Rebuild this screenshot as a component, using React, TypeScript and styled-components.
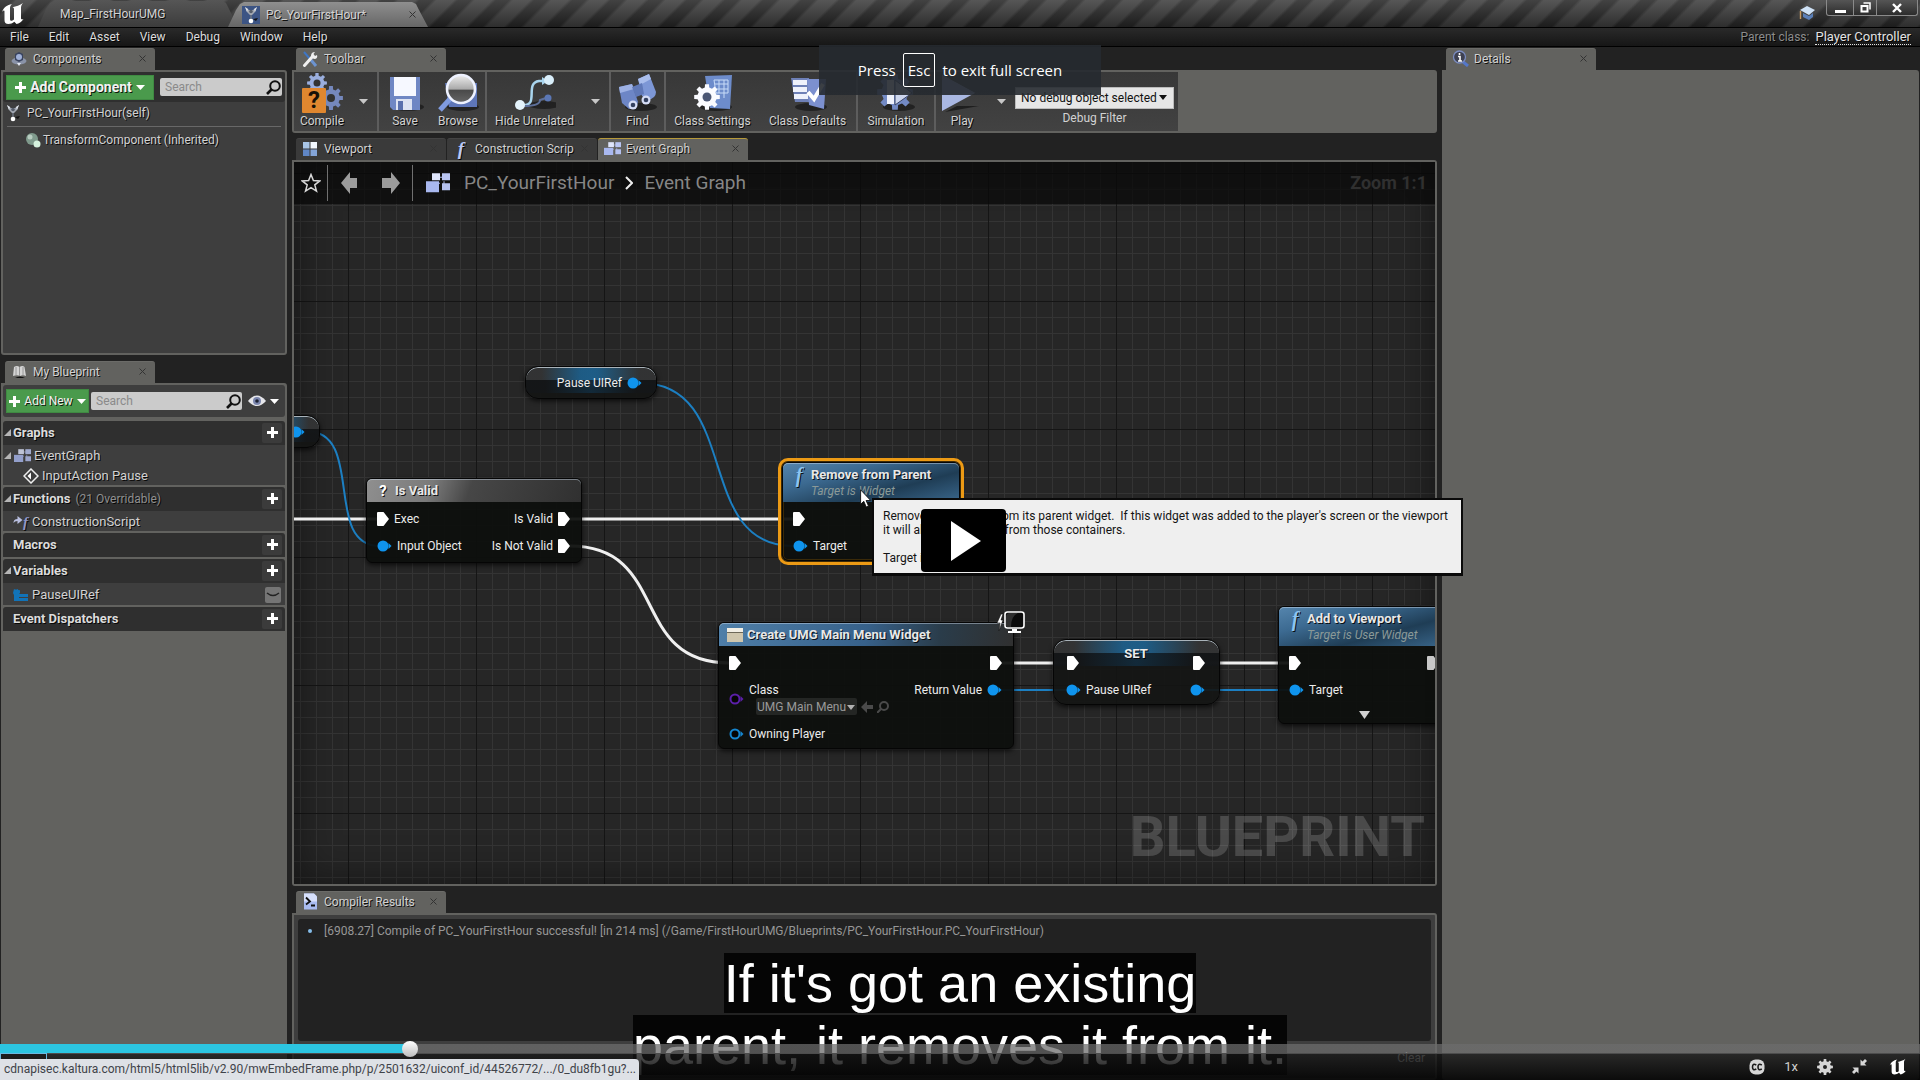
import React from "react";
import styled, { createGlobalStyle, css } from "styled-components";

const ui = `Roboto, "Noto Sans", sans-serif`;
const frame = "#62625f";
const panel = "#3e3e3e";
const base = "#222222";
const accent = "#0f94ee";

const Global = createGlobalStyle`
  *, *::before, *::after { box-sizing: border-box; }
  body { margin: 0; background: ${base}; overflow: hidden; }
  button, input, select { font: inherit; color: inherit; margin: 0; padding: 0; border: 0; background: none; }
  svg { display: block; flex: none; }
`;

const App_ = styled.div`
  position: relative;
  display: flex;
  flex-direction: column;
  height: 100vh;
  overflow: hidden;
  background: ${base};
  color: #d2d2d2;
  font: 12px/16px ${ui};
  text-shadow: 1px 1px 0 rgba(0, 0, 0, 0.85);
`;

/* ---------- window chrome ---------- */
const TitleBar = styled.header`
  display: flex;
  align-items: flex-end;
  height: 28px;
  border-bottom: 1px solid #000;
  background:
    linear-gradient(rgba(255, 255, 255, 0.13), rgba(0, 0, 0, 0.25)),
    repeating-linear-gradient(135deg, #262626 0 9px, #3d3d3d 12px 24px, #262626 27px);
`;
const Logo = styled.div`
  width: 38px;
  height: 27px;
  padding: 2px 0 0 1px;
`;
const WindowTab = styled.div<{ $active?: boolean }>`
  position: relative;
  display: flex;
  align-items: center;
  gap: 6px;
  width: 200px;
  height: ${(p) => (p.$active ? 25 : 26)}px;
  margin-left: ${(p) => (p.$active ? -10 : 0)}px;
  padding: 0 12px 0 ${(p) => (p.$active ? 14 : 22)}px;
  clip-path: polygon(0 100%, 8px 8px, 12px 2px, 16px 0, calc(100% - 16px) 0, calc(100% - 12px) 2px, calc(100% - 9px) 8px, 100% 100%);
  background: ${(p) => (p.$active ? "linear-gradient(#8f8f8f, #666)" : "linear-gradient(#555, #3c3c3c)")};
  button { margin-left: auto; }
`;
const TitleEnd = styled.div`
  display: flex;
  align-self: flex-start;
  margin-left: auto;
  padding-right: 2px;
  gap: 11px;
`;
const WindowButtons = styled.div`
  display: flex;
  height: 16px;
  border: 1px solid #8a8a8a;
  border-top: 0;
  border-radius: 0 0 3px 3px;
  background: linear-gradient(#555, #2c2c2c);
`;
const WindowButton = styled.button<{ $w: number }>`
  display: grid;
  place-items: center;
  width: ${(p) => p.$w}px;
  & + & { border-left: 1px solid #8a8a8a; }
`;
const MenuBar = styled.nav`
  display: flex;
  align-items: center;
  height: 19px;
  border-bottom: 1px solid #000;
  background: linear-gradient(#2a2a2a, #161616);
  button { padding: 0 10px; color: #dcdcdc; text-shadow: inherit; }
`;
const ParentClass = styled.div`
  display: flex;
  gap: 6px;
  margin-left: auto;
  padding-right: 9px;
  color: #8c8c8c;
  a { color: #e2e2e2; text-decoration: none; border-bottom: 1px dotted #e2e2e2; font-size: 13px; line-height: 15px; }
`;

/* ---------- docking ---------- */
const Workspace = styled.div`
  flex: 1;
  min-height: 0;
  display: grid;
  grid-template-columns: 286px minmax(0, 1fr) 477px;
  column-gap: 5px;
  padding: 1px 1px 0;
`;
const Column = styled.div`
  display: flex;
  flex-direction: column;
  min-height: 0;
  min-width: 0;
`;
const TabStrip = styled.div<{ $gap?: number }>`
  display: flex;
  gap: 1px;
  height: 22px;
  flex: none;
  margin-top: ${(p) => p.$gap || 0}px;
  padding-left: 4px;
`;
const DockTab = styled.div<{ $tone?: "idle" | "lit" }>`
  display: flex;
  align-items: center;
  gap: 5px;
  width: 150px;
  padding: 0 9px 2px 5px;
  border-radius: 3px 3px 0 0;
  background: ${(p) => (p.$tone === "idle" ? "#3a3a3a" : frame)};
  border-top: 1px solid ${(p) => (p.$tone === "lit" ? "#b79a3a" : p.$tone === "idle" ? "#444" : "#6b6b68")};
  span { white-space: nowrap; }
  button { margin-left: auto; }
`;
const TabIcon = styled.div`
  display: grid;
  place-items: center;
  width: 18px;
  height: 18px;
`;
const CloseButton = styled.button`
  display: block;
`;
const Panel = styled.section<{ $h?: number; $bg?: string }>`
  display: flex;
  flex-direction: column;
  min-height: 0;
  flex: ${(p) => (p.$h ? `0 0 ${p.$h}px` : "1")};
  border: 2px solid ${frame};
  border-radius: 0 3px 3px 3px;
  background: ${(p) => p.$bg || panel};
`;

/* ---------- left column ---------- */
const PanelTools = styled.div<{ $light?: boolean }>`
  display: flex;
  align-items: center;
  flex: none;
  gap: ${(p) => (p.$light ? 2 : 6)}px;
  height: ${(p) => (p.$light ? 32 : 30)}px;
  padding: 0 3px;
  margin-bottom: ${(p) => (p.$light ? 4 : 0)}px;
  border-radius: 3px;
  background: ${(p) => (p.$light ? panel : "#2f2f2f")};
`;
const GreenButton = styled.button<{ $big?: boolean }>`
  display: flex;
  align-items: center;
  justify-content: center;
  gap: 4px;
  flex: none;
  width: ${(p) => (p.$big ? 148 : 83)}px;
  height: ${(p) => (p.$big ? 25 : 24)}px;
  background: #4a9a4c;
  border: 1px solid #3f8a42;
  color: #f2f2f2;
  text-shadow: inherit;
  ${(p) => p.$big && css`font-size: 14px; font-weight: 700;`}
`;
const SearchBox = styled.label`
  display: flex;
  align-items: center;
  flex: 1;
  min-width: 0;
  height: 18px;
  padding: 0 1px 0 5px;
  border-radius: 2px;
  background: #cbcbcb;
  input { flex: 1; min-width: 0; outline: 0; color: #333; text-shadow: none; }
  input::placeholder { color: #8a8a8a; opacity: 1; }
`;
const ViewButton = styled.button`
  display: flex;
  align-items: center;
  justify-content: center;
  gap: 4px;
  width: 38px;
`;
const TreeRow = styled.div<{ $indent: number; $gap?: number; $h?: number; $size?: number }>`
  display: flex;
  align-items: center;
  gap: ${(p) => p.$gap ?? 4}px;
  height: ${(p) => p.$h || 20}px;
  padding: 1px 4px 0 ${(p) => p.$indent}px;
  background: ${panel};
  font-size: ${(p) => p.$size || 13}px;
  > button { margin-left: auto; }
`;
const Divider = styled.hr`
  width: 274px;
  margin: 4px 4px 2px;
  border: 0;
  border-top: 1px solid #686868;
`;
const Section = styled.div`
  margin-bottom: 2px;
`;
const SectionHead = styled.div`
  display: flex;
  align-items: center;
  height: 24px;
  padding: 0 3px 1px 0;
  border-radius: 3px 3px 0 0;
  background: #2f2f2f;
  h3 { margin: 0; font-size: 13px; font-weight: 700; color: #dcdcdc; }
  small { margin-left: 5px; padding-top: 1px; font-size: 12px; color: #8f8f8f; }
`;
const Expander = styled.span`
  width: 10px;
  padding-left: 1px;
`;
const PlusButton = styled.button`
  display: grid;
  place-items: center;
  width: 20px;
  height: 20px;
  margin-left: auto;
  border-radius: 2px;
  background: #3b3b3b;
`;
const EyeToggle = styled.button`
  display: grid;
  place-items: center;
  width: 16px;
  height: 16px;
  border-radius: 2px;
  background: #757575;
`;

/* ---------- toolbar ---------- */
const ToolbarPanel = styled(Panel)`
  flex-direction: row;
`;
const ToolGroup = styled.div`
  display: flex;
  background: linear-gradient(#383838, #424242);
  & + & { border-left: 2px solid #5d5d5d; }
`;
const ToolButton = styled.button<{ $w: number }>`
  display: flex;
  flex-direction: column;
  align-items: center;
  width: ${(p) => p.$w}px;
  padding-top: 1px;
  white-space: nowrap;
  text-shadow: inherit;
`;
const MoreButton = styled.button`
  display: grid;
  place-items: center;
  width: 27px;
`;
const DebugFilter = styled.label`
  display: flex;
  flex-direction: column;
  align-items: center;
  gap: 1px;
  width: 163px;
  padding: 15px 4px 0 0;
  text-shadow: none;
`;
const SelectWrap = styled.span`
  position: relative;
  width: 159px;
  height: 22px;
  svg { position: absolute; right: 7px; top: 8px; pointer-events: none; }
  select {
    appearance: none;
    width: 100%;
    height: 22px;
    padding-left: 5px;
    background: #e6e6e6;
    border: 1px solid #bbb;
    color: #111;
  }
`;

/* ---------- graph ---------- */
const GraphPanel = styled(Panel)`
  position: relative;
`;
const Canvas = styled.div`
  position: relative;
  flex: 1;
  overflow: hidden;
  background-color: #262626;
  background-image:
    linear-gradient(90deg, #0a0a0a 1px, transparent 1px),
    linear-gradient(#0a0a0a 1px, transparent 1px),
    linear-gradient(90deg, #151515 1px, transparent 1px),
    linear-gradient(#151515 1px, transparent 1px),
    linear-gradient(90deg, #343434 1px, transparent 1px),
    linear-gradient(#343434 1px, transparent 1px);
  background-size: 4096px 4096px, 4096px 4096px, 128px 128px, 128px 128px, 16px 16px, 16px 16px;
  background-position: 822px 0, 0 395px, 54px 11px, 54px 11px, 6px 11px, 6px 11px;
  box-shadow: inset 0 0 40px rgba(0, 0, 0, 0.5);
`;
const GraphHeader = styled.div`
  position: absolute;
  inset: 0 0 auto 0;
  z-index: 2;
  display: flex;
  align-items: center;
  height: 42px;
  padding-right: 8px;
  background: rgba(8, 8, 8, 0.72);
  text-shadow: none;
  color: #868686;
  font-size: 19px;
`;
const HeaderButton = styled.button<{ $w: number }>`
  display: grid;
  place-items: center;
  width: ${(p) => p.$w}px;
  height: 36px;
`;
const Rule = styled.span`
  width: 1px;
  height: 36px;
  background: #707070;
`;
const Crumbs = styled.div`
  display: flex;
  align-items: center;
  gap: 11px;
  padding-left: 13px;
  svg:first-child { margin-right: 3px; }
`;
const Zoom = styled.span`
  margin-left: auto;
  font-size: 18px;
  font-weight: 700;
  color: #303030;
`;
const Watermark = styled.div`
  position: absolute;
  right: 10px;
  bottom: 10px;
  font: 700 56px/74px ${ui};
  color: rgba(255, 255, 255, 0.17);
  text-shadow: none;
`;
const Wires = styled.svg`
  position: absolute;
  inset: 0;
  width: 100%;
  height: 100%;
  fill: none;
`;
const Node = styled.article<{ $x: number; $y: number; $w: number; $selected?: boolean; $round?: boolean }>`
  position: absolute;
  left: ${(p) => p.$x}px;
  top: ${(p) => p.$y}px;
  width: ${(p) => p.$w}px;
  border: 1px solid #050505;
  border-radius: ${(p) => (p.$round ? 13 : 6)}px;
  background: ${(p) =>
    p.$round
      ? "linear-gradient(90deg, rgba(70,70,70,.6), rgba(70,70,70,.6) 12%, rgba(36,120,176,.65) 42%, rgba(36,120,176,.65) 55%, rgba(70,70,70,.6) 88%) 0 0 / 100% 13px no-repeat, linear-gradient(90deg, rgba(20,22,24,.9) 15%, rgba(18,44,62,.9) 50%, rgba(20,22,24,.9) 85%) 0 0 / 100% 26px no-repeat, rgba(20,21,20,.92)"
      : "rgba(13, 15, 13, 0.94)"};
  box-shadow: ${(p) =>
    p.$selected
      ? "0 0 0 1px #3b2a08, 0 0 0 4px #ec9a15, inset 0 0 0 1px #3b2a08"
      : p.$round
        ? "0 2px 5px rgba(0,0,0,.7), inset 0 1px 0 #a9b3ba"
        : "0 2px 5px rgba(0,0,0,.7)"};
  color: #ececec;
`;
const NodeHead = styled.header<{ $tone: "grey" | "blue" | "fade" }>`
  display: flex;
  gap: 4px;
  padding: 4px 8px 3px;
  border-radius: 5px 5px 0 0;
  box-shadow: inset 0 1px 0 rgba(210, 225, 240, 0.45);
  background: ${(p) =>
    ({
      grey: "linear-gradient(110deg, #8f8f8f 0, #7a7a7a 30%, #474747 48%, #303030 100%)",
      blue: "linear-gradient(165deg, #5585ad 0, #3c6a91 30%, #1f3d55 65%, #3a678c 100%)",
      fade: "linear-gradient(100deg, #4f7fa8 0, #37618a 50%, #2a3c4a 75%, #303030 100%)",
    })[p.$tone]};
  h4 { margin: 0; font-size: 13px; font-weight: 700; color: #e8e8e8; white-space: nowrap; }
  p { margin: 0; font-style: italic; color: #8b9a98; text-shadow: none; white-space: nowrap; }
`;
const HeadGlyph = styled.span<{ $f?: boolean }>`
  width: 16px;
  text-align: center;
  font-weight: 700;
  ${(p) => (p.$f ? css`font: italic 700 20px/16px "Liberation Serif", serif; color: #8cc4f2;` : css`font-size: 15px; color: #fff;`)}
`;
const NodeBody = styled.div<{ $pad?: number }>`
  display: flex;
  justify-content: space-between;
  padding: 3px 11px ${(p) => p.$pad ?? 3}px 10px;
  text-shadow: none;
`;
const Pins = styled.div<{ $end?: boolean }>`
  display: flex;
  flex-direction: column;
  align-items: ${(p) => (p.$end ? "flex-end" : "flex-start")};
`;
const PinRow = styled.div<{ $h?: number; $top?: number }>`
  display: flex;
  align-items: center;
  gap: 5px;
  height: ${(p) => p.$h || 27}px;
  padding-top: ${(p) => p.$top || 0}px;
  white-space: nowrap;
`;
const ClassField = styled.label`
  display: flex;
  flex-direction: column;
`;
const ClassPicker = styled.span`
  display: flex;
  align-items: center;
  gap: 4px;
  margin-left: 7px;
  color: #9a9a9a;
`;
const ClassSelect = styled.span`
  position: relative;
  svg { position: absolute; right: 2px; top: 7px; pointer-events: none; }
  select { appearance: none; display: block; width: 101px; height: 17px; padding-left: 1px; border-radius: 2px; background: #242624; }
`;
const SetTop = styled.div`
  display: flex;
  justify-content: space-between;
  align-items: flex-end;
  height: 36px;
  padding: 0 14px 0 13px;
  h4 { align-self: flex-start; margin: 0; padding-top: 6px; font-size: 13px; }
`;
const PillBody = styled.div`
  display: flex;
  align-items: center;
  justify-content: flex-end;
  gap: 5px;
  height: 31px;
  padding-right: 14px;
  text-shadow: none;
`;
const SetBottom = styled(PillBody)`
  justify-content: space-between;
  height: 28px;
  padding: 0 14px 0 12px;
`;
const PinWithText = styled.span`
  display: flex;
  align-items: center;
  gap: 5px;
`;
const Expand = styled.button`
  display: grid;
  place-items: center;
  width: 100%;
  height: 17px;
`;
const FloatIcon = styled.div<{ $x: number; $y: number }>`
  position: absolute;
  left: ${(p) => p.$x}px;
  top: ${(p) => p.$y}px;
`;
const Tooltip = styled.div`
  position: absolute;
  z-index: 3;
  left: 578px;
  top: 336px;
  width: 591px;
  height: 78px;
  padding: 9px 9px;
  border: 2px solid #0a0a0a;
  border-width: 2px 2px 3px;
  background: #efefef;
  color: #141414;
  text-shadow: none;
  font-size: 12px;
  line-height: 14px;
  white-space: pre;
  overflow: hidden;
`;

/* ---------- compiler ---------- */
const LogBox = styled.ul`
  flex: 1;
  margin: 4px 4px 0;
  padding: 4px 10px;
  border-radius: 3px;
  background: ${base};
  list-style: none;
  color: #979797;
  text-shadow: none;
  li { display: flex; align-items: center; gap: 12px; }
  i { width: 4px; height: 4px; border-radius: 50%; background: #86bdea; }
`;
const LogFoot = styled.div`
  display: flex;
  justify-content: flex-end;
  align-items: center;
  height: 37px;
  padding: 0 10px 3px 0;
`;

/* ---------- player overlay ---------- */
const Notice = styled.div`
  position: absolute;
  z-index: 5;
  top: 45px;
  left: 50%;
  transform: translateX(-50%);
  display: flex;
  align-items: center;
  justify-content: center;
  gap: 7px;
  width: 282px;
  height: 50px;
  padding-bottom: 1px;
  background: rgba(38, 42, 48, 0.9);
  color: #fff;
  text-shadow: none;
  font: 15px/20px "Open Sans", "Noto Sans", sans-serif;
  white-space: nowrap;
  kbd { padding: 6px 4px; border: 1px solid #fff; border-radius: 2px; font: inherit; }
`;
const BigPlay = styled.button`
  position: absolute;
  z-index: 6;
  left: 50%;
  top: 50%;
  display: grid;
  place-items: center;
  width: 85px;
  height: 63px;
  margin: -31px 0 0 -39px;
  padding-left: 4px;
  border-radius: 4px;
  background: #000;
`;
const Captions = styled.p`
  position: absolute;
  z-index: 4;
  inset: auto 0 4px 0;
  margin: 0;
  text-align: center;
  font: 54px/62px "Liberation Sans", Arial, sans-serif;
  color: #fff;
  text-shadow: none;
  span { background: rgba(4, 4, 4, 0.96); white-space: pre; }
`;
const Player = styled.div`
  position: absolute;
  z-index: 6;
  inset: auto 0 0 0;
  text-shadow: none;
`;
const Seek = styled.input`
  appearance: none;
  display: block;
  width: 100%;
  height: 9px;
  background: linear-gradient(90deg, #2cc5e1 21.3%, rgba(108, 108, 108, 0.74) 21.3%);
  &::-webkit-slider-thumb {
    appearance: none;
    width: 16px;
    height: 16px;
    border-radius: 50%;
    background: linear-gradient(#fff, #bdbdbd);
  }
`;
const Controls = styled.div`
  display: flex;
  align-items: center;
  justify-content: flex-end;
  gap: 19px;
  height: 27px;
  padding: 0 13px 1px 0;
  border-top: 1px solid #4d4d4d;
  background: linear-gradient(rgba(22, 22, 22, 0.76), rgba(4, 4, 4, 0.92));
  color: #d0d0d0;
  font-size: 13px;
  button { display: block; }
  button:last-child { margin-left: 3px; }
`;
const StatusBubble = styled.div`
  position: absolute;
  z-index: 7;
  left: 0;
  bottom: 0;
  height: 21px;
  padding: 0 3px 0 4px;
  border-radius: 0 4px 0 0;
  background: #dee1e6;
  color: #3f4349;
  text-shadow: none;
  font: 12px/21px ${ui};
`;
const FocusMark = styled.div`
  position: absolute;
  left: 0;
  bottom: 0;
  width: 47px;
  height: 27px;
  border: 1px solid #6ab8e0;
  background: #1c1c1c;
`;

/* ---------- drawings ---------- */
const Caret = ({ w = 9, c = "#fff" }) => (
  <svg width={w} height={5} viewBox="0 0 10 5" preserveAspectRatio="none"><path d="M0 0h10L5 5z" fill={c} /></svg>
);
const Cross = () => (
  <svg width="7" height="7" viewBox="0 0 7 7"><path d="M.5.5l6 6M6.500.5l-6 6" stroke="#333" strokeWidth="1" /></svg>
);
const Close = ({ name }: { name: string }) => <CloseButton aria-label={`Close ${name}`}><Cross /></CloseButton>;
const Plus = ({ s = 11 }) => (
  <svg width={s} height={s} viewBox="0 0 11 11"><path d="M4 0h3v4h4v3H7v4H4V7H0V4h4z" fill="#fff" /></svg>
);
const UMark = ({ s = 24, c = "#fff" }) => (
  <svg width={s} height={s} viewBox="0 0 24 22">
    <path fill={c} d="M1 9C3 4 6 2 11 1 9.500 2.500 9 3.500 9 5.500V16c0 2 1.500 2.500 4 .5V6c0-1-.5-1.500-1.500-1.800C15 3.500 19 2.500 22 0c-1.500 2-2 3-2 5v10c0 1.500 1 1.800 2.500 1-2 3-4.500 4.500-7 5l-2.200-2.200C11.500 20.300 9.500 21 7.500 21c-3 0-4-1.500-4-4V8.500C3.500 7 2.500 7 1 9z" />
  </svg>
);
const Glass = () => (
  <svg width="15" height="15" viewBox="0 0 15 15" fill="none" stroke="#111" strokeWidth="2"><circle cx="9" cy="6" r="4.800" /><path d="M5.500 9.500L1 14" strokeWidth="2.600" /></svg>
);
const Controller = ({ boxed = false }) => (
  <svg width="18" height="18" viewBox="0 0 18 18">
    {boxed && <rect width="18" height="18" fill="#3c5484" />}
    <path d="M3 1l4 3h4l4-3-2 5-3 3H8L5 6z" fill="#a2a8b2" />
    <path d="M3 1l3 2-1 3zM15 1l-3 2 1 3z" fill="#dfe3ea" />
    <circle cx="9" cy="5.500" r="1.800" fill="#565d6a" />
    <path d="M9 9v4" stroke="#6d7482" strokeWidth="1.500" />
    <circle cx="9" cy="15" r="2.300" fill="#fff" />
    <path d="M11 13l5-1-2 3z" fill="#111" />
  </svg>
);
const Blocks = ({ w = 17, dim = false }) => (
  <svg width={w} height={(w * 13) / 16} viewBox="0 0 24 19" opacity={dim ? 0.8 : 1}>
    <path d="M10 4h8M18 8v3M8 10h6" stroke="#aab6e6" strokeWidth="1" />
    <rect x="6" y="0" width="8" height="7" fill="#dfe5fb" /><rect x="16" y="0" width="8" height="7" fill="#b9c5f2" />
    <rect x="0" y="8" width="13" height="11" fill="#a9b8ef" /><rect x="16" y="10" width="8" height="7" fill="#b5c1f0" />
  </svg>
);
const Windows4 = () => (
  <svg width="14" height="14" viewBox="0 0 14 14"><rect width="6.500" height="6.500" fill="#a9c6e8" /><rect x="7.500" width="6.500" height="6.500" fill="#f2f8ff" /><rect y="7.500" width="6.500" height="6.500" fill="#5f86c6" /><rect x="7.500" y="7.500" width="6.500" height="6.500" fill="#83a4d8" /></svg>
);
const FMark = styled.span`
  font: italic 700 19px/18px "Liberation Serif", serif;
  color: #b9c8f6;
`;
const SmallF = styled(FMark)`
  font-size: 15px;
  color: #8f97c8;
`;
const FunctionMark = styled.span`
  display: flex;
  align-items: center;
  width: 16px;
`;
const ComponentsIcon = () => (
  <svg width="16" height="16" viewBox="0 0 16 16"><ellipse cx="8" cy="10" rx="7.500" ry="3.500" fill="#8a93a8" /><path d="M4 3l4-2 4 2v6l-4 2-4-2z" fill="#39435e" /><circle cx="8" cy="6" r="3" fill="#9fb0d8" /><path d="M6 12l2 3 2-3z" fill="#e4e8f2" /></svg>
);
const BookIcon = () => (
  <svg width="15" height="15" viewBox="0 0 15 15"><path d="M2 3q3-2 5.500 0 3-2 5 0l1.500 9q-3-1.500-6 0-3-1.500-7 0z" fill="#d4d4d4" /><path d="M7.500 3v9M4 3v8M11 3v8" stroke="#888" strokeWidth=".8" /><path d="M3 14q5-3 10 0z" fill="#111" /></svg>
);
const WrenchIcon = () => (
  <svg width="16" height="16" viewBox="0 0 16 16"><path d="M2 1l6 7" stroke="#3f76c4" strokeWidth="2" /><path d="M9 9l5 6" stroke="#6c93d0" strokeWidth="3" /><path d="M2.500 14.500l8-9" stroke="#f0f0f0" strokeWidth="3" strokeLinecap="round" /><path d="M9 5q0-4 4-4l-1.500 2 1.500 2 2-1q1 3-2 4-3 0-4-3z" fill="#f0f0f0" /></svg>
);
const InfoIcon = () => (
  <svg width="17" height="17" viewBox="0 0 17 17"><path d="M10 11l6 5" stroke="#5577c8" strokeWidth="3" /><circle cx="7.500" cy="7" r="6" fill="#3e4152" stroke="#7b8cc0" strokeWidth="1.300" /><path d="M7.500 3v2M6 6.500h2V11M6 11h4" stroke="#fff" strokeWidth="1.600" fill="none" /></svg>
);
const ConsoleIcon = () => (
  <svg width="14" height="17" viewBox="0 0 14 16"><path d="M1 0h10l3 3v13H1z" fill="#a9bbf0" /><path d="M1 0h10l3 3v5H1z" fill="#d7e0fb" /><path d="M3 4l4 4-4 3M8 12h4" stroke="#111" strokeWidth="1.800" fill="none" /></svg>
);
const gear = (cx: number, cy: number, r: number, teeth = 8) => {
  const pts: string[] = [];
  for (let i = 0; i < teeth; i++) {
    for (const [o, k] of [[-0.3, 0.74], [-0.2, 1], [0.2, 1], [0.3, 0.74]]) {
      const a = ((i + o) / teeth) * Math.PI * 2;
      pts.push(`${(cx + Math.sin(a) * r * k).toFixed(1)},${(cy - Math.cos(a) * r * k).toFixed(1)}`);
    }
  }
  return pts.join(" ");
};
const Q = styled.span`
  grid-area: 1 / 1;
  align-self: end;
  width: 26px;
  font: 700 24px/26px ${ui};
  color: #171107;
  text-shadow: none;
`;
const CompileArt = styled.span`
  display: grid;
  width: 42px;
  height: 40px;
  svg { grid-area: 1 / 1; }
`;
const ToolSvg = ({ children, w = 42 }: { children: React.ReactNode; w?: number }) => (
  <svg width={w} height="40" viewBox={`0 0 ${w} 40`}>{children}</svg>
);
const Shadow = ({ x = 24, y = 34 }) => <ellipse cx={x} cy={y} rx="16" ry="4" fill="#000" opacity=".45" />;
const CompileIcon = () => (
  <CompileArt>
    <svg width="42" height="40" viewBox="0 0 42 40">
      <polygon points={gear(16, 10, 10)} fill="#9aaede" /><circle cx="16" cy="10" r="3.500" fill="#333" />
      <polygon points={gear(30, 25, 12)} fill="#7588bd" /><circle cx="30" cy="25" r="4" fill="#333" />
      <rect x="1" y="15" width="24" height="25" rx="1" fill="#e0872f" />
    </svg>
    <Q>?</Q>
  </CompileArt>
);
const SaveIcon = () => (
  <ToolSvg><Shadow /><path d="M6 4h30v33H9l-3-3z" fill="#6f87c4" /><path d="M10 4h22v19H10z" fill="#f6f8ff" /><path d="M12 26h16v11H12z" fill="#dde3f2" /><path d="M14 28h5v9h-5z" fill="#5a70ad" /></ToolSvg>
);
const BrowseIcon = () => (
  <ToolSvg>
    <defs><linearGradient id="lens" x1="0" y1="0" x2="0" y2="1"><stop offset="0" stopColor="#eee" /><stop offset=".5" stopColor="#aaa" /><stop offset=".55" stopColor="#4a4a4a" /><stop offset="1" stopColor="#666" /></linearGradient></defs>
    <Shadow x={26} /><path d="M8 10h32v24H12z" fill="#5e76b8" /><path d="M13 26L3 37" stroke="#7f9be0" strokeWidth="5" /><circle cx="24" cy="16" r="14" fill="url(#lens)" stroke="#eef2ff" strokeWidth="2.600" />
  </ToolSvg>
);
const HideIcon = () => (
  <ToolSvg><Shadow x={30} y={32} /><path d="M8 32C26 34 10 10 25 8h6" fill="none" stroke="#a9d5ee" strokeWidth="2.500" /><path d="M10 33q16 0 16-6l6-2" fill="none" stroke="#5d6f99" strokeWidth="2" /><path d="M28 4l6 4-6 4z" fill="#a9d5ee" /><circle cx="6" cy="32" r="5" fill="#e4f3fb" /><circle cx="35" cy="7" r="5" fill="#d9eefa" /><circle cx="34" cy="25" r="3.500" fill="#5b77b5" /></ToolSvg>
);
const FindIcon = () => (
  <ToolSvg><Shadow /><path d="M2 14l13-3 6 18q-1 7-9 7l-7-6z" fill="#6d86c6" /><path d="M2 14l13-3 2 5-14 4z" fill="#9db1e4" /><path d="M21 6l11-5 7 18q0 6-8 8l-6-4z" fill="#7d97d6" /><path d="M21 6l11-5 2 5-11 6z" fill="#a9bdec" /><path d="M15 14l10-4 2 11-8 3z" fill="#6079b8" /><circle cx="16" cy="32" r="4.500" fill="#d5ddf5" /><circle cx="16" cy="32" r="2.300" fill="#34415f" /><circle cx="29" cy="27" r="4.500" fill="#d5ddf5" /><circle cx="29" cy="27" r="2.300" fill="#34415f" /></ToolSvg>
);
const SettingsIcon = () => (
  <ToolSvg><Shadow /><path d="M13 3l27-1-2 34-20-1z" fill="#6d8ccb" /><path d="M22 7h14v13H24zM27 7v13M32 7v18M23 11h13M24 16h12" fill="none" stroke="#c9dcf8" strokeWidth="1" /><polygon points={gear(15, 24, 13)} fill="#fafbff" /><circle cx="15" cy="24" r="4.500" fill="#4a5674" /></ToolSvg>
);
const DefaultsIcon = () => (
  <ToolSvg><Shadow /><path d="M4 5h18l2 24H8z" fill="#6e80b6" /><path d="M6 7h14v5H6zM6 14h14v5H6zM7 21h14v5H7z" fill="#eef1fb" /><path d="M20 6h19l-2 30-15-4z" fill="#7c90cf" /><path d="M21 19l6 7 9-15" fill="none" stroke="#fff" strokeWidth="4" /></ToolSvg>
);
const SimIcon = () => (
  <ToolSvg><Shadow /><polygon points={gear(20, 19, 18)} fill="#7289c4" /><path d="M12 7h7v24h-7z" fill="#eef1fb" /><path d="M20 7l17 13-17 12z" fill="#cdd6ee" stroke="#3a4566" /></ToolSvg>
);
const PlayIcon = () => (
  <ToolSvg><path d="M4 39l12-6h22z" fill="#000" opacity=".5" /><path d="M1 2l33 18L1 38z" fill="#a9b7e2" /><path d="M1 2l33 18-33 2z" fill="#8e9cc9" /></ToolSvg>
);
const Exec = ({ on = true }) => (
  <svg width="12" height="14" viewBox="0 0 12 14"><path d="M0 1q0-1 1-1h5.500L12 7l-5.500 7H1q-1 0-1-1z" fill={on ? "#fff" : "#c8c8c8"} /></svg>
);
const Data = ({ c = accent, hollow = false }) => (
  <svg width="15" height="12" viewBox="0 0 15 12"><circle cx="6" cy="6" r={hollow ? 4.500 : 5.500} fill={hollow ? "#050505" : c} stroke={hollow ? c : "none"} strokeWidth="2" /><path d="M11.500 3L14.500 6l-3 3z" fill={c} /></svg>
);

/* ---------- composed parts ---------- */
const SectionTitle = ({ title, note, open }: { title: string; note?: string; open?: boolean }) => (
  <SectionHead>
    <Expander>{open && <svg width="7" height="7" viewBox="0 0 7 7"><path d="M7 0v7H0z" fill="#b5b5b5" /></svg>}</Expander>
    <h3>{title}</h3>
    {note && <small>{note}</small>}
    <PlusButton aria-label={`Add ${title}`}><Plus /></PlusButton>
  </SectionHead>
);
const Tool = ({ w, label, icon }: { w: number; label: string; icon: React.ReactNode }) => (
  <ToolButton $w={w}>{icon}{label}</ToolButton>
);
const More = ({ name }: { name: string }) => <MoreButton aria-label={name}><Caret c="#c8c8c8" /></MoreButton>;

export default function App() {
  return (
    <App_>
      <Global />
      <TitleBar>
        <Logo><UMark /></Logo>
        <WindowTab><span>Map_FirstHourUMG</span></WindowTab>
        <WindowTab $active><Controller boxed /><span>PC_YourFirstHour*</span><Close name="PC_YourFirstHour" /></WindowTab>
        <TitleEnd>
          <svg width="16" height="20" viewBox="0 0 16 20"><path d="M1 10l7-4 8 4-6 5z" fill="#cfe2f6" /><path d="M4 13v4l6 3 4-3v-4l-4 3z" fill="#5a7fb8" /><path d="M1.500 11v8" stroke="#c79a62" strokeWidth="1.400" /></svg>
          <WindowButtons>
            <WindowButton $w={26} aria-label="Minimize"><svg width="11" height="10"><path d="M0 7h11v3H0z" fill="#fff" /></svg></WindowButton>
            <WindowButton $w={23} aria-label="Restore"><svg width="11" height="11" fill="none" stroke="#fff"><path d="M3.500 1H10v6.500" strokeWidth="1.500" /><path d="M1.500 4h6v5.500h-6z" strokeWidth="2" /></svg></WindowButton>
            <WindowButton $w={41} aria-label="Close window"><svg width="10" height="10"><path d="M1 1l8 8M9 1L1 9" stroke="#fff" strokeWidth="2.400" /></svg></WindowButton>
          </WindowButtons>
        </TitleEnd>
      </TitleBar>
      <MenuBar>
        {["File", "Edit", "Asset", "View", "Debug", "Window", "Help"].map((m) => <button key={m}>{m}</button>)}
        <ParentClass>Parent class: <a href="#class">Player Controller</a></ParentClass>
      </MenuBar>

      <Workspace>
        <Column>
          <TabStrip><DockTab><TabIcon><ComponentsIcon /></TabIcon><span>Components</span><Close name="Components" /></DockTab></TabStrip>
          <Panel $h={285}>
            <PanelTools>
              <GreenButton $big><Plus />Add Component<Caret /></GreenButton>
              <SearchBox><input placeholder="Search" aria-label="Search components" /><Glass /></SearchBox>
            </PanelTools>
            <TreeRow $indent={1} $gap={5} $size={12}><Controller />PC_YourFirstHour(self)</TreeRow>
            <Divider />
            <TreeRow $indent={22} $gap={2} $size={12}>
              <svg width="16" height="16" viewBox="0 0 16 16"><circle cx="7" cy="7" r="6" fill="#7f9a8c" /><circle cx="5" cy="5" r="2.500" fill="#b7ccc0" /><circle cx="12" cy="12" r="3.500" fill="#d6f2de" /></svg>
              TransformComponent (Inherited)
            </TreeRow>
          </Panel>

          <TabStrip $gap={6}><DockTab><TabIcon><BookIcon /></TabIcon><span>My Blueprint</span><Close name="My Blueprint" /></DockTab></TabStrip>
          <Panel $bg={frame}>
            <PanelTools $light>
              <GreenButton><Plus />Add New<Caret /></GreenButton>
              <SearchBox><input placeholder="Search" aria-label="Search blueprint" /><Glass /></SearchBox>
              <ViewButton aria-label="View options">
                <svg width="18" height="12" viewBox="0 0 18 12"><path d="M0 6q9-11 18 0-9 10-18 0z" fill="#e6e6ea" /><circle cx="9" cy="6" r="4" fill="#7b86ae" /><circle cx="9" cy="6" r="1.800" fill="#1d2233" /></svg>
                <Caret />
              </ViewButton>
            </PanelTools>
            <Section>
              <SectionTitle title="Graphs" open />
              <TreeRow $indent={1} $gap={3}>
                <svg width="7" height="7" viewBox="0 0 7 7"><path d="M7 0v7H0z" fill="#b5b5b5" /></svg>
                <Blocks dim />EventGraph
              </TreeRow>
              <TreeRow $indent={20} $gap={3}>
                <svg width="16" height="16" viewBox="0 0 16 16"><path d="M8 1l7 7-7 7-7-7z" fill="none" stroke="#eee" strokeWidth="1.500" /><path d="M8 4.500v7L4.500 8z" fill="#fff" /></svg>
                InputAction Pause
              </TreeRow>
            </Section>
            <Section>
              <SectionTitle title="Functions" note="(21 Overridable)" open />
              <TreeRow $indent={10} $gap={3}>
                <FunctionMark>
                  <svg width="10" height="12" viewBox="0 0 9 12"><path d="M0 7q0-4 4-4V0l5 4-5 4V5Q1 5 0 7z" fill="#b9bfe0" /></svg>
                  <SmallF>f</SmallF>
                </FunctionMark>
                ConstructionScript
              </TreeRow>
            </Section>
            <Section><SectionTitle title="Macros" /></Section>
            <Section>
              <SectionTitle title="Variables" open />
              <TreeRow $indent={10} $gap={4} $h={22}>
                <svg width="15" height="14" viewBox="0 0 15 14"><path d="M1 1q2 1 3.500 0Q6 3 7 2v3l-1 1h9v3H6v1h9v3H1V7L0 5z" fill="#1173b8" /></svg>
                PauseUIRef
                <EyeToggle aria-label="Toggle visibility"><svg width="14" height="6"><path d="M1 1q6 5 12 0" fill="none" stroke="#222" strokeWidth="1.500" /></svg></EyeToggle>
              </TreeRow>
            </Section>
            <Section><SectionTitle title="Event Dispatchers" /></Section>
          </Panel>
        </Column>

        <Column>
          <TabStrip><DockTab><TabIcon><WrenchIcon /></TabIcon><span>Toolbar</span><Close name="Toolbar" /></DockTab></TabStrip>
          <ToolbarPanel $h={63} $bg={frame}>
            <ToolGroup><Tool w={56} label="Compile" icon={<CompileIcon />} /><More name="Compile options" /></ToolGroup>
            <ToolGroup><Tool w={52} label="Save" icon={<SaveIcon />} /><Tool w={54} label="Browse" icon={<BrowseIcon />} /></ToolGroup>
            <ToolGroup><Tool w={95} label="Hide Unrelated" icon={<HideIcon />} /><More name="Hide options" /></ToolGroup>
            <ToolGroup><Tool w={53} label="Find" icon={<FindIcon />} /></ToolGroup>
            <ToolGroup><Tool w={93} label="Class Settings" icon={<SettingsIcon />} /><Tool w={97} label="Class Defaults" icon={<DefaultsIcon />} /></ToolGroup>
            <ToolGroup><Tool w={76} label="Simulation" icon={<SimIcon />} /></ToolGroup>
            <ToolGroup>
              <Tool w={52} label="Play" icon={<PlayIcon />} /><More name="Play options" />
              <DebugFilter>
                <SelectWrap><select><option>No debug object selected</option></select><Caret w={8} c="#111" /></SelectWrap>
                Debug Filter
              </DebugFilter>
            </ToolGroup>
          </ToolbarPanel>

          <TabStrip $gap={5}>
            <DockTab $tone="idle"><TabIcon><Windows4 /></TabIcon><span>Viewport</span><Close name="Viewport" /></DockTab>
            <DockTab $tone="idle"><TabIcon><FMark>f</FMark></TabIcon><span>Construction Scrip</span><Close name="Construction Script" /></DockTab>
            <DockTab $tone="lit"><TabIcon><Blocks /></TabIcon><span>Event Graph</span><Close name="Event Graph" /></DockTab>
          </TabStrip>
          <GraphPanel>
            <Canvas>
              <Watermark>BLUEPRINT</Watermark>
              <Wires>
                <g stroke="#efefef" strokeWidth="3">
                  <path d="M0 357H86M276 357H499M276 384C376 384 335 501 435 501M706 501H775M910 501H997" />
                </g>
                <g stroke="#1c7fc2" strokeWidth="2">
                  <path d="M12 269C72 269 28 384 86 384M346 221C448 221 399 384 499 384M706 528H775M910 528H997" />
                </g>
              </Wires>
              <Node $x={-60} $y={253} $w={86} $round><PillBody><Data /></PillBody></Node>
              <Node $x={231} $y={204} $w={132} $round><PillBody>Pause UIRef<Data /></PillBody></Node>

              <Node $x={72} $y={316} $w={216}>
                <NodeHead $tone="grey"><HeadGlyph>?</HeadGlyph><h4>Is Valid</h4></NodeHead>
                <NodeBody>
                  <Pins><PinRow><Exec />Exec</PinRow><PinRow><Data />Input Object</PinRow></Pins>
                  <Pins $end><PinRow>Is Valid<Exec /></PinRow><PinRow>Is Not Valid<Exec /></PinRow></Pins>
                </NodeBody>
              </Node>

              <Node $x={488} $y={300} $w={178} $selected>
                <NodeHead $tone="blue"><HeadGlyph $f>f</HeadGlyph><div><h4>Remove from Parent</h4><p>Target is Widget</p></div></NodeHead>
                <NodeBody $pad={1}>
                  <Pins><PinRow><Exec /></PinRow><PinRow><Data />Target</PinRow></Pins>
                  <Pins $end><PinRow><Exec /></PinRow></Pins>
                </NodeBody>
              </Node>

              <Node $x={424} $y={460} $w={296}>
                <NodeHead $tone="fade">
                  <svg width="16" height="16" viewBox="0 0 16 16"><path d="M0 1h16v14H0z" fill="#cfc6ad" /><path d="M0 1h16v4H0z" fill="#f1eee4" /><path d="M0 5.500h16" stroke="#6d6858" /></svg>
                  <h4>Create UMG Main Menu Widget</h4>
                </NodeHead>
                <NodeBody $pad={7}>
                  <Pins>
                    <PinRow><Exec /></PinRow>
                    <PinRow $h={39} $top={6}>
                      <Data c="#5b1fa8" hollow />
                      <ClassField>
                        Class
                        <ClassPicker>
                          <ClassSelect><select><option>UMG Main Menu</option></select><Caret w={8} c="#b0b0b0" /></ClassSelect>
                          <svg width="12" height="12" viewBox="0 0 12 12"><path d="M0 6l6-6v4h6v4H6v4z" fill="#4a4a4a" /></svg>
                          <svg width="12" height="12" viewBox="0 0 12 12" fill="none" stroke="#4a4a4a" strokeWidth="2"><circle cx="7" cy="5" r="4" /><path d="M4 8l-4 4" /></svg>
                        </ClassPicker>
                      </ClassField>
                    </PinRow>
                    <PinRow $h={26} $top={12}><Data hollow c="#1586d0" />Owning Player</PinRow>
                  </Pins>
                  <Pins $end><PinRow><Exec /></PinRow><PinRow>Return Value<Data /></PinRow></Pins>
                </NodeBody>
              </Node>
              <FloatIcon $x={702} $y={448}>
                <svg width="30" height="26" viewBox="0 0 30 26"><path d="M5 4L1 13h3l-1 8 4-11H5l2-6z" fill="#fff" stroke="#111" strokeWidth=".6" /><rect x="9" y="2" width="19" height="16" rx="2.500" fill="#0b0b0b" stroke="#fff" strokeWidth="1.600" /><path d="M15 17q0-11 7-14h-8q-4 0-4 4v10z" fill="#2f2f2f" /><path d="M16 19h5v2h4v2H12v-2h4z" fill="#fff" /></svg>
              </FloatIcon>

              <Node $x={759} $y={477} $w={167} $round>
                <SetTop><PinRow><Exec /></PinRow><h4>SET</h4><PinRow><Exec /></PinRow></SetTop>
                <SetBottom><PinWithText><Data />Pause UIRef</PinWithText><Data /></SetBottom>
              </Node>

              <Node $x={984} $y={444} $w={173}>
                <NodeHead $tone="blue"><HeadGlyph $f>f</HeadGlyph><div><h4>Add to Viewport</h4><p>Target is User Widget</p></div></NodeHead>
                <NodeBody>
                  <Pins><PinRow><Exec /></PinRow><PinRow><Data />Target</PinRow></Pins>
                  <Pins $end><PinRow><Exec on={false} /></PinRow></Pins>
                </NodeBody>
                <Expand aria-label="Show advanced pins"><svg width="11" height="8"><path d="M0 0h11L5.500 8z" fill="#d0d0d0" /></svg></Expand>
              </Node>

              <FloatIcon $x={566} $y={327}>
                <svg width="12" height="19" viewBox="0 0 12 19"><path d="M.6.8v14.500l3.200-3 2.400 5.700 2.300-1-2.400-5.500h4.600z" fill="#fff" stroke="#111" strokeWidth=".9" /></svg>
              </FloatIcon>
              <GraphHeader>
                <HeaderButton $w={33} aria-label="Favorite"><svg width="20" height="20" viewBox="0 0 20 20"><path d="M10 1.500l2.400 6 6.400.4-5 4 1.700 6.300L10 14.700l-5.500 3.500 1.700-6.300-5-4 6.400-.4z" fill="none" stroke="#d8d8d8" strokeWidth="1.500" /></svg></HeaderButton>
                <Rule />
                <HeaderButton $w={41} aria-label="Back"><svg width="16" height="22" viewBox="0 0 16 22"><path d="M0 11L9 0v6h7v10H9v6z" fill="#9c9c9c" /></svg></HeaderButton>
                <HeaderButton $w={43} aria-label="Forward"><svg width="18" height="22" viewBox="0 0 18 22"><path d="M18 11L9 0v6H0v10h9v6z" fill="#9c9c9c" /></svg></HeaderButton>
                <Rule />
                <Crumbs><Blocks w={24} /><span>PC_YourFirstHour</span><svg width="8" height="14" viewBox="0 0 8 14"><path d="M1 1l6 6-6 6" fill="none" stroke="#eee" strokeWidth="2" /></svg><span>Event Graph</span></Crumbs>
                <Zoom>Zoom 1:1</Zoom>
              </GraphHeader>
            </Canvas>
            <Tooltip role="tooltip">{"Removes the widget from its parent widget.  If this widget was added to the player's screen or the viewport\nit will also be removed from those containers.\n\nTarget is Widget"}</Tooltip>
          </GraphPanel>

          <TabStrip $gap={5}><DockTab><TabIcon><ConsoleIcon /></TabIcon><span>Compiler Results</span><Close name="Compiler Results" /></DockTab></TabStrip>
          <Panel $h={167}>
            <LogBox><li><i />[6908.27] Compile of PC_YourFirstHour successful! [in 214 ms] (/Game/FirstHourUMG/Blueprints/PC_YourFirstHour.PC_YourFirstHour)</li></LogBox>
            <LogFoot><button>Clear</button></LogFoot>
          </Panel>
        </Column>

        <Column>
          <TabStrip><DockTab><TabIcon><InfoIcon /></TabIcon><span>Details</span><Close name="Details" /></DockTab></TabStrip>
          <Panel $bg={frame} />
        </Column>
      </Workspace>

      <Captions><span>If it's got an existing</span><br /><span>parent, it removes it from it.</span></Captions>
      <BigPlay aria-label="Play"><svg width="30" height="40" viewBox="0 0 30 40"><path d="M0 0l30 20L0 40z" fill="#fff" /></svg></BigPlay>
      <Notice>Press <kbd>Esc</kbd> to exit full screen</Notice>

      <Player>
        <Seek type="range" min="0" max="1000" defaultValue="211" aria-label="Seek" />
        <Controls>
          <FocusMark />
          <button aria-label="Captions"><svg width="16" height="16" viewBox="0 0 16 16"><rect x=".5" y=".5" width="15" height="15" rx="6" fill="#d6d6d6" /><path d="M7.300 6q-3.800-2-3.800 2t3.800 2M12.800 6Q9 4 9 8t3.800 2" fill="none" stroke="#1a1a1a" strokeWidth="1.600" /></svg></button>
          <button>1x</button>
          <button aria-label="Settings"><svg width="16" height="16" viewBox="0 0 16 16"><polygon points={gear(8, 8, 8)} fill="#d6d6d6" /><circle cx="8" cy="8" r="2" fill="#222" /></svg></button>
          <button aria-label="Exit full screen"><svg width="15" height="15" viewBox="0 0 15 15" fill="#d6d6d6"><path d="M8.500 6.500V.5l2 2L13 0l2 2-2.500 2.500 2 2zM6.500 8.500v6l-2-2L2 15l-2-2 2.500-2.500-2-2z" /></svg></button>
          <button aria-label="Unreal Engine"><UMark s={18} /></button>
        </Controls>
      </Player>
      <StatusBubble>cdnapisec.kaltura.com/html5/html5lib/v2.90/mwEmbedFrame.php/p/2501632/uiconf_id/44526772/.../0_du8fb1gu?...</StatusBubble>
    </App_>
  );
}
